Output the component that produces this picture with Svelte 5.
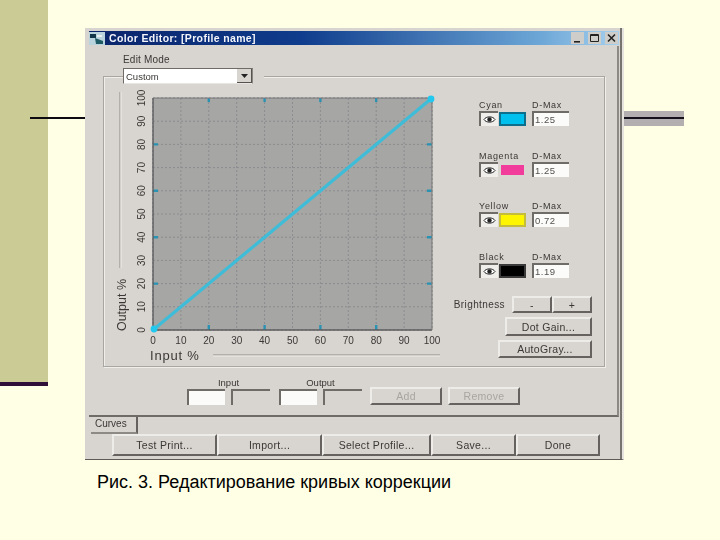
<script>
	const pct = [0, 10, 20, 30, 40, 50, 60, 70, 80, 90, 100];
	const left = 153, right = 432, top = 98, bottom = 330;
	const xAt = (p) => left + ((right - left) * p) / 100;
	const yAt = (p) => bottom - ((bottom - top) * p) / 100;

	const inks = [
		{ name: 'Cyan', value: '1.25', color: '#00c0ee', edge: '#0d6f8c' },
		{ name: 'Magenta', value: '1.25', color: '#f23c9c', edge: '#d9d5d0' },
		{ name: 'Yellow', value: '0.72', color: '#fdf500', edge: '#c4bd3c' },
		{ name: 'Black', value: '1.19', color: '#000000', edge: '#3a3a3a' }
	];

	const actions = [
		{ label: 'Test Print...', w: 105 },
		{ label: 'Import...', w: 105 },
		{ label: 'Select Profile...', w: 109 },
		{ label: 'Save...', w: 85 },
		{ label: 'Done', w: 84 }
	];
</script>

<div class="slide">
	<div class="sidebar"></div>
	<div class="rule"></div>
	<div class="band"></div>

	<div class="window">
		<div class="title">
			<svg class="appicon" width="16" height="13" viewBox="0 0 16 13">
				<rect width="16" height="13" fill="#b9d4dc" />
				<path d="M1 2h6v4H1z" fill="#12384a" />
				<path d="M6 6l8 3v3H7z" fill="#1d5a63" />
				<path d="M8 3h5v2H8z" fill="#e8f1f2" />
			</svg>
			<span class="caption">Color Editor: [Profile name]</span>
			<div class="winbtns">
				<span class="winbtn"><svg width="13" height="12" viewBox="0 0 13 12"><path d="M3 9h6v1.6H3z" fill="#222" /></svg></span>
				<span class="winbtn"><svg width="13" height="12" viewBox="0 0 13 12"><path d="M2.5 2.5h8v7h-8zM2.5 3.5h8" fill="none" stroke="#222" /></svg></span>
				<span class="winbtn"><svg width="13" height="12" viewBox="0 0 13 12"><path d="M3 2.5l7 7M10 2.5l-7 7" fill="none" stroke="#222" stroke-width="1.6" /></svg></span>
			</div>
		</div>

		<div class="panel">
			<div class="mode">
				<div class="modelabel">Edit Mode</div>
				<div class="combo">
					<span class="combotext">Custom</span>
					<span class="comboarrow"><svg width="9" height="6" viewBox="0 0 9 6"><path d="M1 1h7L4.5 5z" fill="#222" /></svg></span>
				</div>
			</div>

			<div class="group">
				<svg class="chart" width="346" height="289" viewBox="104 77 346 289">
					<path d="M120 92V268" stroke="#8f8c88" />
					<path d="M121 92V268" stroke="#f2f0ec" />
					<path d="M213 355H440" stroke="#8f8c88" />
					<path d="M213 356H440" stroke="#f2f0ec" />

					<rect x={left} y={top} width={right - left} height={bottom - top} fill="#a6a6a4" />
					{#each pct as p}
						<path d="M{xAt(p)} {top}V{bottom}" stroke="#8c8c90" stroke-dasharray="2 2" />
						<path d="M{left} {yAt(p)}H{right}" stroke="#8c8c90" stroke-dasharray="2 2" />
						<text class="tick" x={xAt(p)} y="344" text-anchor="middle">{p}</text>
						<text class="tick" text-anchor="middle" transform="translate(145 {yAt(p)}) rotate(-90)">{p}</text>
						{#if p % 20 === 0 && p > 0 && p < 100}
							<path d="M{xAt(p)} {top}v4M{xAt(p)} {bottom}v-5M{left} {yAt(p)}h5M{right} {yAt(p)}h-5" stroke="#2a93b4" stroke-width="2.4" />
						{/if}
					{/each}
					<path d="M{left} {top}V{bottom}H{right}" fill="none" stroke="#5d5d60" stroke-width="1.4" />
					<path d="M{left} {top}H{right}V{bottom}" fill="none" stroke="#77777a" />
					<path d="M{left} {bottom}L{right} {top}" stroke="#3fbdd8" stroke-width="3.2" />
					<circle cx={left + 1} cy={bottom - 1} r="3.4" fill="#22c8ee" />
					<circle cx={right - 1} cy={top + 1} r="3.4" fill="#22c8ee" />

					<text class="axis" text-anchor="middle" transform="translate(126 305) rotate(-90)">Output %</text>
					<text class="axis wide" x="150" y="360">Input %</text>
				</svg>

				<div class="side">
					{#each inks as ink}
						<div class="ink">
							<span class="inkname">{ink.name}</span>
							<span class="inkname">D-Max</span>
							<div class="inkctl">
								<span class="eye">
									<svg width="13" height="9" viewBox="0 0 13 9">
										<path d="M1 4.5C3 1 10 1 12 4.5C10 8 3 8 1 4.5z" fill="#fff" stroke="#222" />
										<circle cx="6.5" cy="4.5" r="2.2" fill="#222" />
									</svg>
								</span>
								<span class="swatch" style="background:{ink.color};border-color:{ink.edge}"></span>
							</div>
							<span class="field dmax">{ink.value}</span>
						</div>
					{/each}

					<div class="bright">
						<span class="brightlabel">Brightness</span>
						<button class="btn stepper">-</button>
						<button class="btn stepper">+</button>
					</div>
					<button class="btn dotgain">Dot Gain...</button>
					<button class="btn autogray">AutoGray...</button>
				</div>
			</div>

			<div class="points">
				<div class="pair">
					<span class="pairlabel">Input</span>
					<div class="pairfields"><span class="field blank"></span><span class="field blank off"></span></div>
				</div>
				<div class="pair">
					<span class="pairlabel">Output</span>
					<div class="pairfields"><span class="field blank"></span><span class="field blank off"></span></div>
				</div>
				<button class="btn pointbtn first" disabled>Add</button>
				<button class="btn pointbtn" disabled>Remove</button>
			</div>
		</div>

		<div class="tab">Curves</div>
		<div class="actions">
			{#each actions as a}
				<button class="btn action" style="width:{a.w}px">{a.label}</button>
			{/each}
		</div>
	</div>

	<p class="figure">Рис. 3. Редактирование кривых коррекции</p>
</div>

<style>
	:global(body) {
		margin: 0;
		background: #ffffe5;
	}
	.slide {
		position: relative;
		width: 720px;
		height: 540px;
		box-sizing: border-box;
		padding: 28px 96px 0 85px;
		overflow: hidden;
		background: #ffffe5;
		font-family: 'Liberation Sans', Arial, sans-serif;
	}
	.sidebar {
		position: absolute;
		left: 0;
		top: 0;
		width: 48px;
		height: 382px;
		background: #cbcb96;
		border-bottom: 4px solid #2e0f3a;
	}
	.rule {
		position: absolute;
		left: 30px;
		top: 117px;
		width: 56px;
		height: 2px;
		background: #0e0a12;
	}
	.band {
		position: absolute;
		left: 624px;
		top: 111px;
		width: 60px;
		height: 15px;
		background: linear-gradient(#b3afb0 0 6px, #14101c 6px 8px, #b3afb0 8px);
	}
	.window {
		position: relative;
		width: 539px;
		height: 432px;
		box-sizing: border-box;
		padding: 3px 3px 0 4px;
		background: #d8d4cf;
		border-right: 2px solid #e6e3df;
		border-bottom: 1px solid #5d5a57;
		box-shadow: inset -2px 0 0 #77746f;
		filter: blur(0.3px);
		color: #3a3836;
		font-size: 9.5px;
	}
	.title {
		display: flex;
		align-items: center;
		height: 14px;
		background: linear-gradient(90deg, #0a246a 0%, #0f3c8c 40%, #6ca6d6 85%, #a6d0ee 100%);
	}
	.appicon {
		margin-right: 4px;
	}
	.caption {
		color: #f2f4fa;
		font-weight: 700;
		font-size: 10.5px;
		letter-spacing: 0.35px;
	}
	.winbtns {
		display: flex;
		gap: 4px;
		margin-left: auto;
		margin-right: 1px;
	}
	.winbtn {
		display: flex;
		width: 13px;
		height: 12px;
		background: #cfcdca;
	}
	.panel {
		box-sizing: border-box;
		height: 371px;
		margin-top: 1px;
		border-right: 2px solid #8d8a86;
		border-bottom: 2px solid #6f6c68;
	}
	.mode {
		position: relative;
		width: 130px;
		margin-left: 34px;
		padding-top: 8px;
		padding-right: 11px;
		background: linear-gradient(transparent 20px, #d8d4cf 20px);
	}
	.modelabel {
		height: 14px;
		font-size: 10px;
		line-height: 12px;
		letter-spacing: 0.2px;
	}
	.combo {
		display: flex;
		align-items: center;
		justify-content: space-between;
		box-sizing: border-box;
		height: 16px;
		background: #fff;
		border: 1px solid;
		border-color: #6f6c68 #8a8783 #e8e6e2 #6f6c68;
	}
	.combotext {
		padding-left: 2px;
		font-size: 9.5px;
	}
	.comboarrow {
		display: flex;
		align-items: center;
		justify-content: center;
		width: 15px;
		height: 14px;
		background: #d8d4cf;
		border-right: 1px solid #55524f;
		border-bottom: 1px solid #55524f;
		box-sizing: border-box;
	}
	.group {
		display: flex;
		box-sizing: border-box;
		width: 502px;
		height: 291px;
		margin: -8px 0 0 14px;
		border: 1px solid #a9a6a1;
		box-shadow: inset 1px 1px 0 #f0eeea, 1px 1px 0 #f0eeea;
	}
	.chart {
		display: block;
		flex: none;
	}
	.tick {
		font-size: 10px;
		fill: #3a3836;
	}
	.axis {
		font-size: 12.5px;
		fill: #3a3836;
	}
	.wide {
		font-size: 13px;
		letter-spacing: 0.8px;
	}
	.side {
		display: flex;
		flex-direction: column;
		align-items: flex-end;
		width: 154px;
		flex: none;
		padding-top: 23px;
		padding-right: 12px;
		box-sizing: border-box;
	}
	.ink {
		display: grid;
		grid-template-columns: 47px 37px;
		column-gap: 6px;
		grid-template-rows: 11px 15px;
		margin-bottom: 24.5px;
		width: 90px;
		align-self: flex-end;
		margin-right: 23px;
	}
	.inkname {
		font-size: 9px;
		line-height: 10px;
		letter-spacing: 0.7px;
		white-space: nowrap;
	}
	.inkctl {
		display: flex;
		gap: 1px;
	}
	.eye {
		display: flex;
		align-items: center;
		justify-content: center;
		box-sizing: border-box;
		width: 19px;
		height: 15px;
		background: #f0eeeb;
		border-top: 2px solid #6f6c68;
		border-left: 2px solid #6f6c68;
	}
	.swatch {
		box-sizing: border-box;
		width: 27px;
		height: 14px;
		margin-top: 1px;
		border: 2px solid;
	}
	.field {
		display: block;
		box-sizing: border-box;
		background: #fbfbf9;
		border-top: 2px solid #6f6c68;
		border-left: 2px solid #6f6c68;
	}
	.dmax {
		height: 15px;
		padding-left: 1px;
		font-size: 9.5px;
		line-height: 13px;
		letter-spacing: 0.5px;
		color: #55524f;
	}
	.btn {
		box-sizing: border-box;
		margin: 0;
		padding: 0;
		background: #d8d4cf;
		border: 2px solid;
		border-color: #eeece8 #65625f #65625f #eeece8;
		border-radius: 0;
		font-family: inherit;
		font-size: 10.5px;
		letter-spacing: 0.3px;
		color: #3a3836;
		white-space: nowrap;
	}
	.btn:disabled {
		color: #a8a5a0;
	}
	.bright {
		display: flex;
		align-items: center;
		margin-top: -6px;
	}
	.brightlabel {
		margin-right: 7px;
		font-size: 10px;
		letter-spacing: 0.4px;
	}
	.stepper {
		width: 40px;
		height: 17px;
	}
	.dotgain {
		width: 87px;
		height: 19px;
		margin-top: 4px;
	}
	.autogray {
		width: 94px;
		height: 18px;
		margin-top: 4px;
	}
	.points {
		display: flex;
		align-items: flex-end;
		gap: 9px;
		padding: 10px 0 0 98px;
	}
	.pair {
		width: 83px;
	}
	.pairlabel {
		display: block;
		height: 12px;
		text-align: center;
		font-size: 9.5px;
		line-height: 12px;
	}
	.pairfields {
		display: flex;
		justify-content: space-between;
	}
	.blank {
		width: 38px;
		height: 16px;
	}
	.off {
		background: #d8d4cf;
		width: 39px;
	}
	.pointbtn {
		width: 72px;
		height: 18px;
		margin-left: -3px;
	}
	.first {
		margin-left: -1px;
	}
	.tab {
		box-sizing: border-box;
		width: 47px;
		height: 17px;
		margin-left: 2px;
		padding-left: 4px;
		border-right: 2px solid #65625f;
		border-bottom: 2px solid #8d8a86;
		font-size: 10px;
		line-height: 14px;
	}
	.actions {
		display: flex;
		margin-left: 23px;
	}
	.action {
		height: 22px;
	}
	.figure {
		margin: 13px 0 0 12px;
		font-size: 18px;
		line-height: 18px;
		color: #000;
		white-space: nowrap;
	}
</style>
